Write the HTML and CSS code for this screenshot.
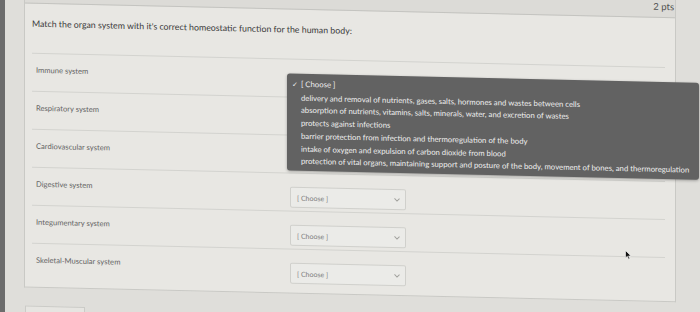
FILE: index.html
```html
<!DOCTYPE html>
<html>
<head>
    <meta charset="UTF-8">
    <meta name="viewport" content="width=device-width, initial-scale=1.0">
    <title>Quiz Question</title>
    <link rel="stylesheet" href="styles.css">
</head>
<body>
    <div class="screen">
        <div class="bezel"></div>
        <div class="page">
            <div class="question-card">
                <div class="question-header">2 pts</div>
                <p class="question-text">Match the organ system with it's correct homeostatic function for the human body:</p>

                <div class="answers">
                    <div class="answer-row">
                        <div class="answer-label">Immune system</div>
                        <div class="choice under-menu">
                            <span>[ Choose ]</span>
                        </div>
                        <div class="choice-menu">
                            <div class="menu-item checked"><span class="check">✓</span>[ Choose ]</div>
                            <div class="menu-item">delivery and removal of nutrients, gases, salts, hormones and wastes between cells</div>
                            <div class="menu-item">absorption of nutrients, vitamins, salts, minerals, water, and excretion of wastes</div>
                            <div class="menu-item">protects against infections</div>
                            <div class="menu-item">barrier protection from infection and thermoregulation of the body</div>
                            <div class="menu-item">intake of oxygen and expulsion of carbon dioxide from blood</div>
                            <div class="menu-item">protection of vital organs, maintaining support and posture of the body, movement of bones, and thermoregulation</div>
                        </div>
                    </div>
                    <div class="answer-row">
                        <div class="answer-label">Respiratory system</div>
                        <div class="choice under-menu"><span>[ Choose ]</span></div>
                    </div>
                    <div class="answer-row">
                        <div class="answer-label">Cardiovascular system</div>
                        <div class="choice under-menu"><span>[ Choose ]</span></div>
                    </div>
                    <div class="answer-row">
                        <div class="answer-label">Digestive system</div>
                        <div class="choice">
                            <span>[ Choose ]</span>
                            <svg class="chevron" width="6" height="4" viewBox="0 0 6 4"><polyline points="0.5,0.5 3,3 5.5,0.5" fill="none" stroke="#a2a29e" stroke-width="1"/></svg>
                        </div>
                    </div>
                    <div class="answer-row">
                        <div class="answer-label">Integumentary system</div>
                        <div class="choice">
                            <span>[ Choose ]</span>
                            <svg class="chevron" width="6" height="4" viewBox="0 0 6 4"><polyline points="0.5,0.5 3,3 5.5,0.5" fill="none" stroke="#a2a29e" stroke-width="1"/></svg>
                        </div>
                    </div>
                    <div class="answer-row">
                        <div class="answer-label">Skeletal-Muscular system</div>
                        <div class="choice">
                            <span>[ Choose ]</span>
                            <svg class="chevron" width="6" height="4" viewBox="0 0 6 4"><polyline points="0.5,0.5 3,3 5.5,0.5" fill="none" stroke="#a2a29e" stroke-width="1"/></svg>
                        </div>
                    </div>
                </div>
            </div>
            <div class="nav-button"></div>
        </div>
    </div>

    <svg class="cursor" width="7" height="10" viewBox="0 0 7 10">
        <path d="M0.5,0.5 L0.5,8 L2.3,6.3 L3.6,9.3 L4.8,8.8 L3.6,5.9 L6,5.9 Z" fill="#111" stroke="#fff" stroke-width="0.6"/>
    </svg>
</body>
</html>
```

FILE: styles.css
```css
* {
    box-sizing: border-box;
}
html, body {
    margin: 0;
    height: 100%;
}
body {
    background-color: #dfdeda;
    font-family: Lato, "Open Sans", sans-serif;
    overflow: hidden;
    position: relative;
}
/* the photo is taken at a slight angle */
.screen {
    display: flex;
    height: 346px;
    margin-top: -30px;
    overflow: hidden;
    transform: skewY(1.3deg);
    transform-origin: 0 0;
}
.bezel {
    flex: none;
    width: 5px;
    background-color: #6c6c6c;
}
.page {
    flex: 1;
    padding-left: 19px;
}
.question-card {
    width: 652px;
    background-color: #e8e7e3;
    border: 1px solid #c9c9c5;
    border-top: none;
    padding-bottom: 6px;
}
.question-header {
    height: 33px;
    display: flex;
    justify-content: flex-end;
    align-items: flex-end;
    padding: 0 1px 5px 0;
    background-color: #dcdbd7;
    border-bottom: 1px solid #c4c4c0;
    font-size: 9.5px;
    line-height: 10px;
    color: #505050;
}
.question-text {
    margin: 0;
    padding: 15px 0 24px 7px;
    font-size: 8.8px;
    line-height: 10px;
    color: #3a3a3a;
}
.answers {
    margin: 0 10px 0 7px;
}
.answer-row {
    position: relative;
    display: flex;
    height: 38px;
    border-top: 1px solid #d3d3cf;
}
.answer-label {
    width: 258px;
    padding: 11px 0 0 4px;
    font-size: 7.6px;
    line-height: 10px;
    color: #646464;
}
.choice {
    width: 116px;
    height: 21px;
    margin-top: 13px;
    display: flex;
    align-items: center;
    justify-content: space-between;
    padding: 0 5px 0 6px;
    background-color: #ebebe8;
    border: 1px solid #d0d0cc;
    border-radius: 2px;
    font-size: 7px;
    color: #808080;
}
/* hidden behind the open menu */
.under-menu {
    visibility: hidden;
}
.choice-menu {
    position: absolute;
    z-index: 2;
    top: 14px;
    left: 255px;
    width: 412px;
    padding: 4px 0 3px 0;
    background-color: #626262;
    border-radius: 3px;
    box-shadow: 0 1px 3px rgba(0, 0, 0, 0.3);
    font-size: 7.75px;
    line-height: 12.7px;
    color: #f0f0f0;
    white-space: nowrap;
}
.menu-item {
    padding-left: 14px;
}
.menu-item.checked {
    padding-left: 5px;
}
.check {
    display: inline-block;
    width: 9px;
    font-family: "DejaVu Sans", sans-serif;
    font-size: 7px;
}
.nav-button {
    width: 60px;
    height: 20px;
    margin: 18px 0 0 1px;
    background-color: #e6e5e1;
    border: 1px solid #cbcbc7;
}
.cursor {
    position: absolute;
    left: 625px;
    top: 250px;
}
```
